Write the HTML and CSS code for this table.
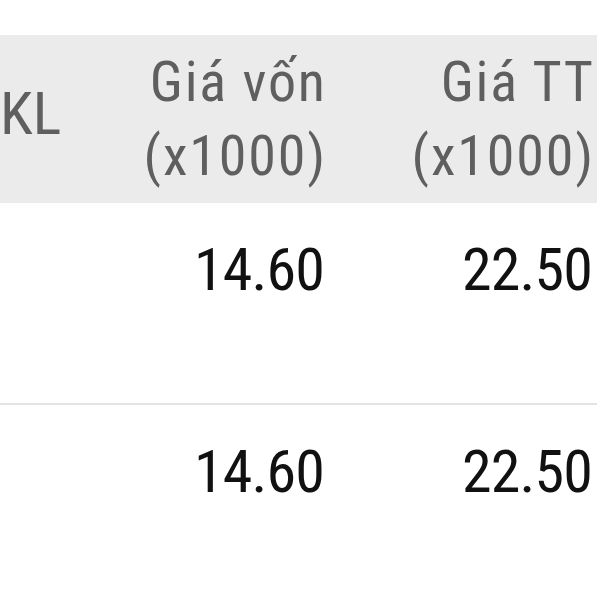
FILE: index.html
```html
<!DOCTYPE html>
<html lang="vi">
<head>
<meta charset="utf-8">
<title>Bảng giá</title>
<link rel="stylesheet" href="styles.css">
</head>
<body>
<div class="table">
  <div class="row head">
    <div class="cell c-kl"><span class="t">KL</span></div>
    <div class="cell c-num"><span class="t">Giá vốn<br>(x1000)</span></div>
    <div class="cell c-num"><span class="t">Giá TT<br>(x1000)</span></div>
  </div>
  <div class="row body">
    <div class="cell c-kl"></div>
    <div class="cell c-num"><span class="t">14.60</span></div>
    <div class="cell c-num"><span class="t">22.50</span></div>
  </div>
  <div class="row body">
    <div class="cell c-kl"></div>
    <div class="cell c-num"><span class="t">14.60</span></div>
    <div class="cell c-num"><span class="t">22.50</span></div>
  </div>
</div>
</body>
</html>
```
FILE: styles.css
```css
html, body {
  margin: 0;
  padding: 0;
  background: #ffffff;
}
body {
  font-family: Roboto, "Noto Sans", sans-serif;
  font-stretch: 75%;
  width: 600px;
  height: 600px;
  overflow: hidden;
}
.table {
  padding-top: 35px;
  width: 597px;
}
.row {
  display: grid;
  grid-template-columns: 1fr 225px 268px;
  padding-right: 4px;
}
.head {
  background: #ebebeb;
  height: 168px;
  box-sizing: border-box;
  padding-top: 10px;
  padding-bottom: 8px;
  color: #5f5f5f;
  font-size: 56px;
  line-height: 74px;
}
.head .c-num .t {
  letter-spacing: 1.8px;
  margin-right: -1.8px;
}
.head .c-kl {
  align-self: center;
  font-size: 60px;
  padding-bottom: 12px;
}
.body {
  height: 202px;
  box-sizing: border-box;
  padding-top: 30px;
  border-bottom: 2px solid #e3e3e3;
  color: #111111;
  font-size: 60px;
  line-height: 74px;
}
.body .c-num .t {
  letter-spacing: -0.8px;
  margin-right: 0.8px;
}
.c-num {
  text-align: right;
}
.t {
  display: inline-block;
}
```
